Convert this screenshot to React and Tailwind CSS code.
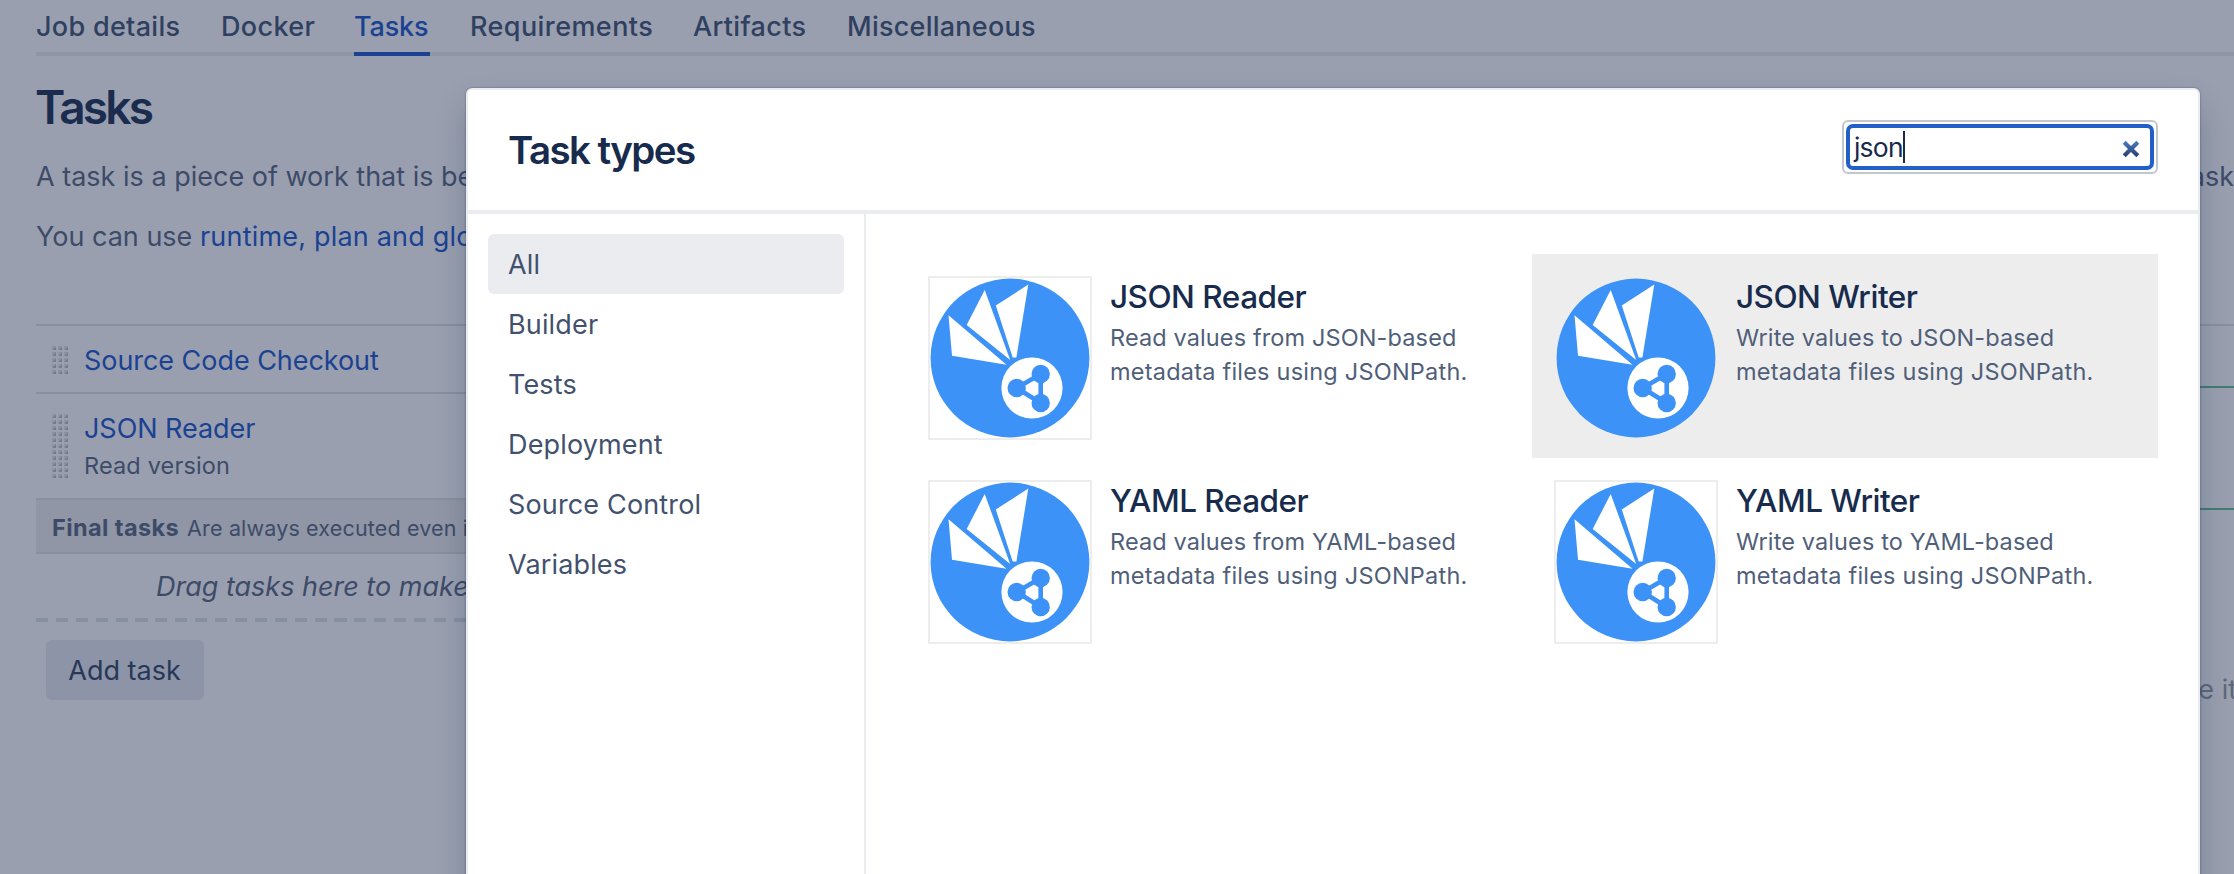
import React from 'react';

const tabs = [
  { label: 'Job details', cls: 'w-[145px] tracking-[0.3px]' },
  { label: 'Docker', cls: 'w-[93px] tracking-[0.36px]' },
  { label: 'Tasks', cls: 'w-[76px] tracking-[-0.15px]', active: true },
  { label: 'Requirements', cls: 'w-[183px] tracking-[0.42px]' },
  { label: 'Artifacts', cls: 'w-[114px] tracking-[0.35px]' },
  { label: 'Miscellaneous', cls: 'w-[189px] tracking-[0.25px]' },
];

const categories = ['All', 'Builder', 'Tests', 'Deployment', 'Source Control', 'Variables'];

const taskTypes = [
  { name: 'JSON Reader', lines: ['Read values from JSON-based', 'metadata files using JSONPath.'] },
  { name: 'JSON Writer', lines: ['Write values to JSON-based', 'metadata files using JSONPath.'], hovered: true },
  { name: 'YAML Reader', lines: ['Read values from YAML-based', 'metadata files using JSONPath.'] },
  { name: 'YAML Writer', lines: ['Write values to YAML-based', 'metadata files using JSONPath.'] },
];

function Grip({ rows }) {
  const cells = [];
  for (let r = 0; r < rows; r++) {
    for (let c = 0; c < 3; c++) {
      cells.push(
        <g key={`${r}-${c}`} transform={`translate(${c * 6} ${r * 6})`}>
          <rect width="4" height="4" fill="#8c92a1" />
          <path d="M4 0.5V4H0.5Z" fill="#737a8b" />
        </g>
      );
    }
  }
  return (
    <svg className="mt-5 shrink-0" width="16" height={rows * 6 - 2}>
      {cells}
    </svg>
  );
}

function TaskLogo() {
  return (
    <svg className="block size-full" viewBox="2 2 160 160">
      <circle cx="82" cy="82" r="79.4" fill="#3c92f7" />
      <g fill="#fff">
        <path d="M20.5 39.3L24 79.7L78.5 88.7Z" />
        <path d="M56.7 14L38.7 49L82.2 84Z" />
        <path d="M100.3 8.5L67.8 29.6L84.7 81.6H88.4Z" />
        <circle cx="104" cy="112" r="30.6" />
      </g>
      <g fill="#3c92f7" stroke="#3c92f7" strokeWidth="4.6">
        <path d="M112.7 98L88.7 112L112.7 127Z" fill="none" />
        <circle cx="88.7" cy="112" r="9.2" stroke="none" />
        <circle cx="112.7" cy="98" r="9.2" stroke="none" />
        <circle cx="112.7" cy="127" r="9.2" stroke="none" />
      </g>
    </svg>
  );
}

function TaskCard({ task }) {
  return (
    <div className={`flex h-[204px] p-[22px] ${task.hovered ? 'bg-[#ededed]' : ''}`}>
      <div className="size-[164px] shrink-0 border-2 border-[#ededed]">
        <TaskLogo />
      </div>
      <div className="pl-[18px] whitespace-nowrap">
        <h3 className="text-[31.5px] leading-[41px] font-medium tracking-[-0.5px] text-[#172b4d]">{task.name}</h3>
        <p className="mt-1 text-[23.5px] leading-[34px] tracking-[0.12px] text-[#505f79]">{task.lines[0]}</p>
        <p className="text-[23.5px] leading-[34px] tracking-[0.22px] text-[#505f79]">{task.lines[1]}</p>
      </div>
    </div>
  );
}

function PlanPage() {
  return (
    <div className="pl-9">
      <nav className="flex h-14 gap-10 border-b-4 border-[#8e95a5] text-[27px] leading-[54px] font-medium whitespace-nowrap text-[#2f4060]">
        {tabs.map((t) => (
          <div
            key={t.label}
            className={`h-14 shrink-0 ${t.cls} ${t.active ? 'border-b-4 border-[#1b4292] text-[#1b4292]' : ''}`}
          >
            {t.label}
          </div>
        ))}
      </nav>

      <h1 className="mt-[23px] -ml-px text-[46px] leading-[56px] font-semibold tracking-[-2.8px] text-[#1b2c4e]">Tasks</h1>
      <div className="mt-[22px] flex justify-between text-[27px] leading-10 whitespace-nowrap">
        <p>A task is a piece of work that is being</p>
        <p>task</p>
      </div>
      <p className="mt-5 text-[27px] leading-10 whitespace-nowrap">
        <span>You can use </span>
        <span className="tracking-[0.2px] text-[#1b4292]">runtime, plan and global</span>
      </p>

      <div className="mt-[67px] flex justify-between">
        <div className="w-[1200px]">
          <div className="flex h-[68px] gap-4 border-t-2 border-[#8790a0] pl-4">
            <Grip rows={5} />
            <div className="pt-[15px] text-[27px] leading-10 tracking-[-0.05px] text-[#1b4292]">Source Code Checkout</div>
          </div>
          <div className="flex h-[106px] gap-4 border-t-2 border-[#8790a0] pl-4">
            <Grip rows={11} />
            <div className="pt-[15px]">
              <div className="text-[27px] leading-10 tracking-[-0.05px] text-[#1b4292]">JSON Reader</div>
              <div className="text-[23.5px] leading-[34px] tracking-[0.15px]">Read version</div>
            </div>
          </div>
          <div className="flex h-14 items-baseline gap-2 border-y-2 border-[#8790a0] bg-[#9096a5] pl-4 leading-[56px]">
            <strong className="text-[23.5px] font-bold tracking-[0.4px]">Final tasks</strong>
            <span className="text-[21.5px] tracking-[0.16px]">Are always executed even if</span>
          </div>
          <div className="h-16 pl-[120px] text-[27px] leading-[66px] italic">Drag tasks here to make</div>
          <div className="h-1 bg-[repeating-linear-gradient(90deg,#8790a0_0_12px,transparent_12px_19.9px)]" />
          <button className="mt-[18px] ml-[10px] block h-[60px] w-[158px] rounded-md bg-[#8e94a7] pr-px text-[27px] leading-[62px] text-[#263858]">
            Add task
          </button>
        </div>
        <div className="w-[300px] border-t-2 border-[#8790a0] pt-[60px]">
          <div className="h-[124px] border-y-2 border-[#437c72]" />
          <p className="mt-[160px] -mr-[3px] text-right text-[27px] leading-10 whitespace-nowrap text-[#5f6778]">
            configure it
          </p>
        </div>
      </div>
    </div>
  );
}

function SearchField() {
  return (
    <div className="h-[54px] w-[316px] rounded-md border-2 border-[#c1c7d0] bg-white p-[2px]">
      <div className="flex h-[46px] items-center rounded-[7px] border-4 border-[#2260c8] pr-[10px] pl-1">
        <span className="text-[26.5px] leading-[38px] tracking-[-0.8px] text-[#172b4d]">json</span>
        <span className="h-8 w-[2px] bg-[#172b4d]" />
        <svg className="mt-[3px] ml-auto" width="18" height="18" viewBox="0 0 18 18">
          <defs>
            <linearGradient id="clear" gradientUnits="userSpaceOnUse" x1="0" y1="0" x2="0" y2="18">
              <stop offset="0" stopColor="#4c80c8" />
              <stop offset="1" stopColor="#27396b" />
            </linearGradient>
          </defs>
          <path d="M2.2 2.2L15.8 15.8M15.8 2.2L2.2 15.8" stroke="url(#clear)" strokeWidth="4.2" />
        </svg>
      </div>
    </div>
  );
}

function TaskTypesDialog() {
  return (
    <div className="absolute top-[88px] left-[466px] flex h-[960px] w-[1734px] flex-col rounded-md border-2 border-[#ebecf0] bg-white shadow-[0_0_2px_rgba(9,30,66,0.5),0_16px_32px_-4px_rgba(9,30,66,0.28)]">
      <header className="flex h-[124px] shrink-0 justify-between border-b-4 border-[#ebecf0] px-10">
        <h2 className="text-[38.5px] leading-[120px] font-semibold tracking-[-1.6px] text-[#172b4d]">Task types</h2>
        <div className="pt-[30px]">
          <SearchField />
        </div>
      </header>
      <div className="flex grow">
        <ul className="w-[398px] shrink-0 border-r-2 border-[#ebecf0] p-5">
          {categories.map((c) => (
            <li
              key={c}
              className={`h-[60px] rounded-md pl-5 text-[27px] leading-[62px] tracking-[0.15px] text-[#42526e] ${c === 'All' ? 'bg-[#ebecf0]' : ''}`}
            >
              {c}
            </li>
          ))}
        </ul>
        <div className="grid grow grid-cols-2 content-start p-10">
          {taskTypes.map((t) => (
            <TaskCard key={t.name} task={t} />
          ))}
        </div>
      </div>
    </div>
  );
}

export default function App() {
  return (
    <div className="relative h-[874px] w-[2234px] overflow-hidden bg-[#999faf] font-['Inter','Liberation_Sans',sans-serif] text-[#3d4b68]">
      <PlanPage />
      <TaskTypesDialog />
    </div>
  );
}
